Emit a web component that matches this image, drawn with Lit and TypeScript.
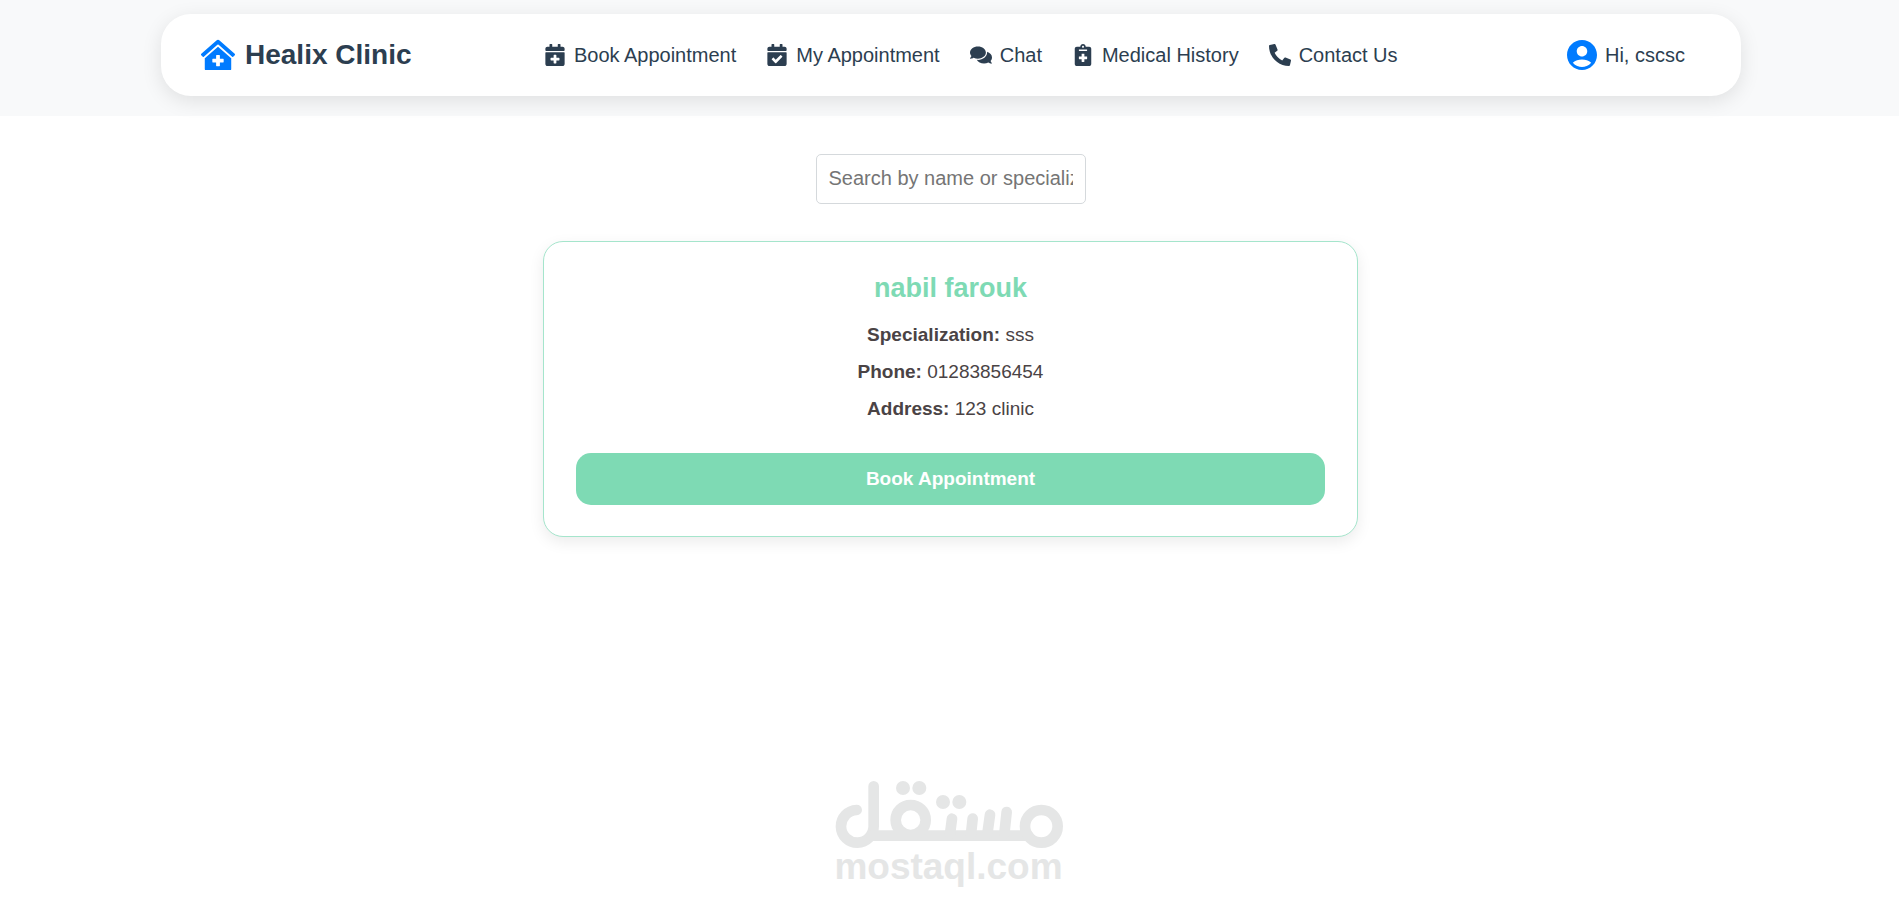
import { LitElement, html, css, svg } from "lit";
import { customElement, property } from "lit/decorators.js";

const calendarBody =
  "M436 160H12c-6.6 0-12-5.4-12-12v-36c0-26.5 21.5-48 48-48h48V12c0-6.6 5.4-12 12-12h40c6.6 0 12 5.4 12 12v52h128V12c0-6.6 5.4-12 12-12h40c6.6 0 12 5.4 12 12v52h48c26.5 0 48 21.5 48 48v36c0 6.6-5.4 12-12 12zM12 192h424c6.6 0 12 5.4 12 12v260c0 26.5-21.5 48-48 48H48c-26.5 0-48-21.5-48-48V204c0-6.6 5.4-12 12-12z";

const icons: Record<string, { box: string; d: string }> = {
  calendarPlus: {
    box: "0 0 448 512",
    d: calendarBody +
      "m316 140c0-6.6-5.4-12-12-12h-60v-60c0-6.6-5.4-12-12-12h-40c-6.6 0-12 5.4-12 12v60h-60c-6.6 0-12 5.4-12 12v40c0 6.6 5.4 12 12 12h60v60c0 6.6 5.4 12 12 12h40c6.6 0 12-5.4 12-12v-60h60c6.6 0 12-5.4 12-12v-40z",
  },
  calendarCheck: {
    box: "0 0 448 512",
    d: calendarBody +
      "m333.296 95.947l-28.169-28.398c-4.667-4.705-12.265-4.736-16.97-.068L194.12 364.665l-45.98-46.352c-4.667-4.705-12.266-4.736-16.971-.068l-28.397 28.17c-4.705 4.667-4.736 12.265-.068 16.97l82.601 83.269c4.667 4.705 12.265 4.736 16.97.068l142.953-141.805c4.705-4.667 4.736-12.265.068-16.97z",
  },
  comments: {
    box: "0 0 576 512",
    d: "M416 192c0-88.4-93.1-160-208-160S0 103.6 0 192c0 34.3 14.1 65.9 38 92-13.4 30.2-35.5 54.2-35.8 54.5-2.2 2.3-2.8 5.7-1.5 8.7S4.8 352 8 352c36.6 0 66.9-12.3 88.7-25 32.2 15.7 70.3 25 111.3 25 114.9 0 208-71.6 208-160zm122 220c23.9-26 38-57.7 38-92 0-66.9-53.5-124.2-129.3-148.1.9 6.6 1.3 13.3 1.3 20.1 0 105.9-107.7 192-240 192-10.8 0-21.3-.8-31.7-1.9C207.8 439.6 281.8 480 368 480c41 0 79.1-9.2 111.3-25 21.8 12.7 52.1 25 88.7 25 3.2 0 6.1-1.9 7.3-4.8 1.3-2.9.7-6.3-1.5-8.7-.3-.3-22.4-24.2-35.8-54.5z",
  },
  notes: {
    box: "0 0 384 512",
    d: "M336 64h-80c0-35.3-28.7-64-64-64s-64 28.7-64 64H48C21.5 64 0 85.5 0 112v352c0 26.5 21.5 48 48 48h288c26.5 0 48-21.5 48-48V112c0-26.5-21.5-48-48-48zM192 40c13.3 0 24 10.7 24 24s-10.7 24-24 24-24-10.7-24-24 10.7-24 24-24zm96 304c0 4.4-3.6 8-8 8h-56v56c0 4.4-3.6 8-8 8h-48c-4.4 0-8-3.6-8-8v-56h-56c-4.4 0-8-3.6-8-8v-48c0-4.4 3.6-8 8-8h56v-56c0-4.4 3.6-8 8-8h48c4.4 0 8 3.6 8 8v56h56c4.4 0 8 3.6 8 8v48zm0-192c0 4.4-3.6 8-8 8H104c-4.4 0-8-3.6-8-8v-16c0-4.4 3.6-8 8-8h176c4.4 0 8 3.6 8 8v16z",
  },
  phone: {
    box: "0 0 512 512",
    d: "M497.39 361.8l-112-48a24 24 0 0 0-28 6.9l-49.6 60.6A370.66 370.66 0 0 1 130.6 204.11l60.6-49.6a23.94 23.94 0 0 0 6.9-28l-48-112A24.16 24.16 0 0 0 122.6.61l-104 24A24 24 0 0 0 0 48c0 256.5 207.9 464 464 464a24 24 0 0 0 23.4-18.6l24-104a24.29 24.29 0 0 0-14.01-27.6z",
  },
  clinic: {
    box: "0 0 576 512",
    d: "M288 115L69.47 307.71c-1.62 1.46-3.69 2.14-5.47 3.35V496a16 16 0 0 0 16 16h416a16 16 0 0 0 16-16V311.1c-1.7-1.16-3.72-1.82-5.26-3.2zm96 261a8 8 0 0 1-8 8h-56v56a8 8 0 0 1-8 8h-48a8 8 0 0 1-8-8v-56h-56a8 8 0 0 1-8-8v-48a8 8 0 0 1 8-8h56v-56a8 8 0 0 1 8-8h48a8 8 0 0 1 8 8v56h56a8 8 0 0 1 8 8zm186.69-139.72l-255.94-226a39.85 39.85 0 0 0-53.45 0l-256 226a16 16 0 0 0-1.21 22.6L25.5 282.7a16 16 0 0 0 22.6 1.21L277.42 81.63a16 16 0 0 1 21.17 0L527.91 283.9a16 16 0 0 0 22.6-1.21l21.4-23.82a16 16 0 0 0-1.22-22.59z",
  },
  account: {
    box: "0 0 24 24",
    d: "M12 2C6.48 2 2 6.48 2 12s4.48 10 10 10 10-4.48 10-10S17.52 2 12 2zm0 4c1.93 0 3.5 1.57 3.5 3.5S13.93 13 12 13s-3.5-1.57-3.5-3.5S10.07 6 12 6zm0 14c-2.03 0-4.43-.82-6.14-2.88C7.55 15.8 9.68 15 12 15s4.45.8 6.14 2.12C16.43 19.18 14.03 20 12 20z",
  },
};

@customElement("clinic-icon")
class ClinicIcon extends LitElement {
  @property() name = "";

  static styles = css`
    :host {
      display: block;
      flex: none;
    }
    .glyph {
      display: block;
      width: 100%;
      height: 100%;
      fill: currentColor;
    }
  `;

  render() {
    const icon = icons[this.name];
    return html`<svg class="glyph" viewBox=${icon.box} aria-hidden="true">
      ${svg`<path d=${icon.d}></path>`}
    </svg>`;
  }
}

const links = [
  { icon: "calendarPlus", label: "Book Appointment" },
  { icon: "calendarCheck", label: "My Appointment" },
  { icon: "comments", label: "Chat" },
  { icon: "notes", label: "Medical History" },
  { icon: "phone", label: "Contact Us" },
];

@customElement("clinic-header")
class ClinicHeader extends LitElement {
  static styles = css`
    :host {
      display: block;
      padding: 14px 158px 20px 161px;
      background: #f8f9fa;
    }
    .bar {
      display: flex;
      align-items: center;
      justify-content: space-between;
      box-sizing: border-box;
      min-height: 82px;
      padding: 0 40px;
      border-radius: 30px;
      background: #fff;
      box-shadow: 0 5px 20px rgba(0, 0, 0, 0.1);
      color: #2c3e50;
      font-size: 20px;
      line-height: 24px;
      white-space: nowrap;
    }
    a {
      color: inherit;
      text-decoration: none;
    }
    .brand {
      display: flex;
      align-items: center;
      gap: 10px;
      font-size: 28px;
      line-height: 34px;
      font-weight: 700;
    }
    .logo {
      width: 34px;
      height: 34px;
      color: #007bff;
    }
    .links {
      display: flex;
      gap: 30px;
      margin: 0;
      padding: 0;
      list-style: none;
    }
    .link {
      display: flex;
      align-items: center;
      gap: 8px;
    }
    .link-icon {
      width: 22px;
      height: 22px;
    }
    .user {
      display: flex;
      align-items: center;
      gap: 5px;
      padding: 0 16px 0 34px;
    }
    .avatar {
      width: 36px;
      height: 36px;
      color: #007bff;
    }
  `;

  render() {
    return html`
      <div class="bar">
        <a class="brand" href="#">
          <clinic-icon class="logo" name="clinic"></clinic-icon>
          <span>Healix Clinic</span>
        </a>
        <nav>
          <ul class="links">
            ${links.map(
              (l) => html`<li>
                <a class="link" href="#">
                  <clinic-icon class="link-icon" name=${l.icon}></clinic-icon>
                  <span>${l.label}</span>
                </a>
              </li>`
            )}
          </ul>
        </nav>
        <a class="user" href="#">
          <clinic-icon class="avatar" name="account"></clinic-icon>
          <span>Hi, cscsc</span>
        </a>
      </div>
    `;
  }
}

@customElement("doctor-card")
class DoctorCard extends LitElement {
  @property() name = "";
  @property() specialization = "";
  @property() phone = "";
  @property() address = "";

  static styles = css`
    :host {
      display: block;
      box-sizing: border-box;
      padding: 31px 32px;
      border: 1px solid #a5e5cc;
      border-radius: 20px;
      background: #fff;
      box-shadow: 0 5px 15px rgba(0, 0, 0, 0.08);
      color: #4a4345;
      text-align: center;
    }
    .name {
      margin: 0 0 17px;
      color: #7edab4;
      font-size: 27px;
      line-height: 30px;
      font-weight: 700;
    }
    .facts {
      display: grid;
      gap: 8px;
      margin-bottom: 30px;
      font-size: 19px;
      line-height: 29px;
    }
    .fact {
      margin: 0;
    }
    .book {
      display: block;
      width: 100%;
      padding: 14px;
      border: 0;
      border-radius: 15px;
      background: #7edab4;
      color: #fff;
      font-family: inherit;
      font-size: 19px;
      line-height: 24px;
      font-weight: 700;
      cursor: pointer;
    }
  `;

  render() {
    return html`
      <h2 class="name">${this.name}</h2>
      <div class="facts">
        <p class="fact"><strong>Specialization:</strong> ${this.specialization}</p>
        <p class="fact"><strong>Phone:</strong> ${this.phone}</p>
        <p class="fact"><strong>Address:</strong> ${this.address}</p>
      </div>
      <button class="book" type="button">Book Appointment</button>
    `;
  }
}

@customElement("site-mark")
class SiteMark extends LitElement {
  static styles = css`
    :host {
      display: block;
      color: #e5e6e6;
      font-size: 37px;
      line-height: 37px;
      font-weight: 700;
      text-align: center;
    }
    .mark {
      display: block;
      width: 228px;
      height: 67px;
      margin: 0 auto;
      fill: none;
      stroke: currentColor;
      stroke-width: 32;
      stroke-linecap: round;
    }
    .tooth {
      stroke-width: 32;
    }
    .dot {
      fill: currentColor;
      stroke: none;
    }
  `;

  render() {
    return html`
      <svg class="mark" viewBox="75 36 684 201" role="img" aria-label="مستقل">
        <path d="M140 123A49 49 0 1 0 191 172V52"></path>
        <path d="M185 200H655"></path>
        <circle cx="302" cy="153" r="45"></circle>
        <circle cx="694" cy="172" r="49"></circle>
        <path class="tooth" d="M426 149L420 195M488 149L483 195M540 137L532 195M590 129L583 195"></path>
        <circle class="dot" cx="279" cy="57" r="21"></circle>
        <circle class="dot" cx="328" cy="57" r="21"></circle>
        <circle class="dot" cx="399" cy="99" r="21"></circle>
        <circle class="dot" cx="448" cy="99" r="21"></circle>
      </svg>
      <div>mostaql.com</div>
    `;
  }
}

@customElement("app-root")
class AppRoot extends LitElement {
  static styles = css`
    :host {
      display: flex;
      flex-direction: column;
      min-height: 100vh;
      background: #fff;
      font-family: "Liberation Sans", Arial, sans-serif;
    }
    .page {
      flex: 1;
      display: flex;
      flex-direction: column;
      align-items: center;
      padding: 38px 0 18px 2px;
    }
    .search {
      box-sizing: border-box;
      width: 270px;
      height: 50px;
      margin-bottom: 37px;
      padding: 0 12px 2px;
      border: 1px solid #d5d9dc;
      border-radius: 5px;
      background: #fff;
      color: #2c3e50;
      font-family: inherit;
      font-size: 20px;
    }
    .search::placeholder {
      color: #757575;
    }
    .card {
      width: 100%;
      max-width: 815px;
    }
    .watermark {
      padding: 0 2px 20px 0;
    }
  `;

  render() {
    return html`
      <clinic-header></clinic-header>
      <main class="page">
        <input
          class="search"
          type="text"
          aria-label="Search by name or specialization"
          placeholder="Search by name or specialization"
        />
        <doctor-card
          class="card"
          name="nabil farouk"
          specialization="sss"
          phone="01283856454"
          address="123 clinic"
        ></doctor-card>
      </main>
      <site-mark class="watermark"></site-mark>
    `;
  }
}
